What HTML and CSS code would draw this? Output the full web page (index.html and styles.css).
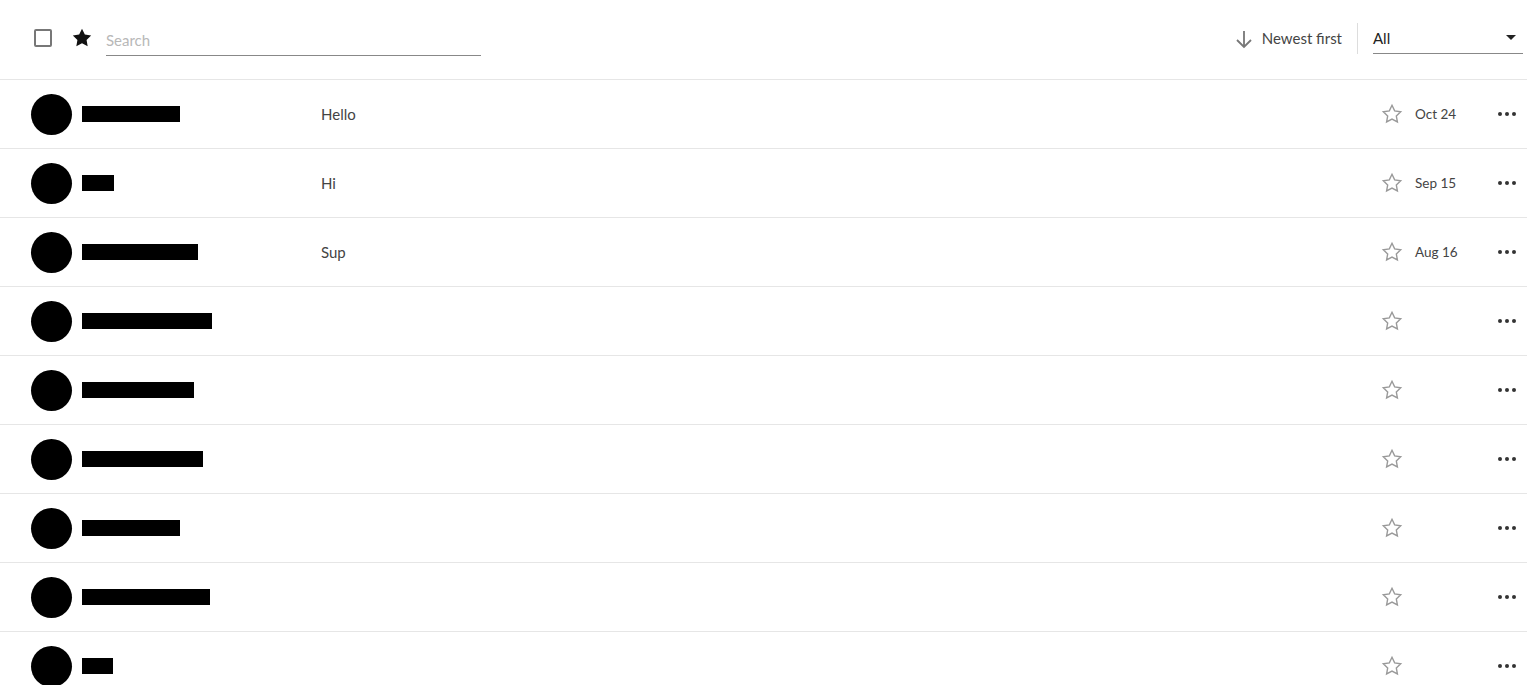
FILE: index.html
```html
<!DOCTYPE html>
<html>
<head>
<meta charset="utf-8">
<link rel="stylesheet" href="styles.css">
</head>
<body>
<header class="toolbar">
  <div class="tb-left">
    <span class="checkbox"></span>
    <svg class="star-filled" width="22" height="22" viewBox="0 0 24 24"><polygon points="12,2 15.09,8.26 22,9.27 17,14.14 18.18,21.02 12,17.77 5.82,21.02 7,14.14 2,9.27 8.91,8.26" fill="#111"/></svg>
    <div class="search"><span class="placeholder">Search</span></div>
  </div>
  <div class="tb-right">
    <div class="sort">
      <svg width="18" height="20" viewBox="0 0 18 20"><path d="M9 2 V18 M2 11 L9 18 L16 11" fill="none" stroke="#777" stroke-width="1.8"/></svg>
      <span>Newest first</span>
    </div>
    <span class="divider"></span>
    <div class="select"><span>All</span><span class="caret"></span></div>
  </div>
</header>
<main class="list">
  <div class="row"><span class="avatar"></span><div class="name"><span class="redact" style="width:98px"></span></div><div class="msg">Hello</div><svg class="star" width="22" height="22" viewBox="0 0 24 24"><polygon points="12,2.5 14.9,8.6 21.5,9.5 16.7,14.1 17.9,20.7 12,17.5 6.1,20.7 7.3,14.1 2.5,9.5 9.1,8.6"/></svg><div class="date">Oct 24</div><div class="dots"><i></i><i></i><i></i></div></div>
  <div class="row"><span class="avatar"></span><div class="name"><span class="redact" style="width:32px"></span></div><div class="msg">Hi</div><svg class="star" width="22" height="22" viewBox="0 0 24 24"><polygon points="12,2.5 14.9,8.6 21.5,9.5 16.7,14.1 17.9,20.7 12,17.5 6.1,20.7 7.3,14.1 2.5,9.5 9.1,8.6"/></svg><div class="date">Sep 15</div><div class="dots"><i></i><i></i><i></i></div></div>
  <div class="row"><span class="avatar"></span><div class="name"><span class="redact" style="width:116px"></span></div><div class="msg">Sup</div><svg class="star" width="22" height="22" viewBox="0 0 24 24"><polygon points="12,2.5 14.9,8.6 21.5,9.5 16.7,14.1 17.9,20.7 12,17.5 6.1,20.7 7.3,14.1 2.5,9.5 9.1,8.6"/></svg><div class="date">Aug 16</div><div class="dots"><i></i><i></i><i></i></div></div>
  <div class="row"><span class="avatar"></span><div class="name"><span class="redact" style="width:130px"></span></div><div class="msg"></div><svg class="star" width="22" height="22" viewBox="0 0 24 24"><polygon points="12,2.5 14.9,8.6 21.5,9.5 16.7,14.1 17.9,20.7 12,17.5 6.1,20.7 7.3,14.1 2.5,9.5 9.1,8.6"/></svg><div class="date"></div><div class="dots"><i></i><i></i><i></i></div></div>
  <div class="row"><span class="avatar"></span><div class="name"><span class="redact" style="width:112px"></span></div><div class="msg"></div><svg class="star" width="22" height="22" viewBox="0 0 24 24"><polygon points="12,2.5 14.9,8.6 21.5,9.5 16.7,14.1 17.9,20.7 12,17.5 6.1,20.7 7.3,14.1 2.5,9.5 9.1,8.6"/></svg><div class="date"></div><div class="dots"><i></i><i></i><i></i></div></div>
  <div class="row"><span class="avatar"></span><div class="name"><span class="redact" style="width:121px"></span></div><div class="msg"></div><svg class="star" width="22" height="22" viewBox="0 0 24 24"><polygon points="12,2.5 14.9,8.6 21.5,9.5 16.7,14.1 17.9,20.7 12,17.5 6.1,20.7 7.3,14.1 2.5,9.5 9.1,8.6"/></svg><div class="date"></div><div class="dots"><i></i><i></i><i></i></div></div>
  <div class="row"><span class="avatar"></span><div class="name"><span class="redact" style="width:98px"></span></div><div class="msg"></div><svg class="star" width="22" height="22" viewBox="0 0 24 24"><polygon points="12,2.5 14.9,8.6 21.5,9.5 16.7,14.1 17.9,20.7 12,17.5 6.1,20.7 7.3,14.1 2.5,9.5 9.1,8.6"/></svg><div class="date"></div><div class="dots"><i></i><i></i><i></i></div></div>
  <div class="row"><span class="avatar"></span><div class="name"><span class="redact" style="width:128px"></span></div><div class="msg"></div><svg class="star" width="22" height="22" viewBox="0 0 24 24"><polygon points="12,2.5 14.9,8.6 21.5,9.5 16.7,14.1 17.9,20.7 12,17.5 6.1,20.7 7.3,14.1 2.5,9.5 9.1,8.6"/></svg><div class="date"></div><div class="dots"><i></i><i></i><i></i></div></div>
  <div class="row"><span class="avatar"></span><div class="name"><span class="redact" style="width:31px"></span></div><div class="msg"></div><svg class="star" width="22" height="22" viewBox="0 0 24 24"><polygon points="12,2.5 14.9,8.6 21.5,9.5 16.7,14.1 17.9,20.7 12,17.5 6.1,20.7 7.3,14.1 2.5,9.5 9.1,8.6"/></svg><div class="date"></div><div class="dots"><i></i><i></i><i></i></div></div>
</main>
</body>
</html>
```
FILE: styles.css
```css
* { box-sizing: border-box; }
html, body { margin: 0; padding: 0; background: #fff; }
body {
  font-family: Lato, "Open Sans", "Liberation Sans", sans-serif;
  color: #333;
  overflow: hidden;
}
.toolbar {
  height: 80px;
  border-bottom: 1px solid #e6e6e6;
  display: flex;
  align-items: flex-start;
  justify-content: space-between;
  padding: 0 4px 0 34px;
}
.tb-left { display: flex; align-items: flex-start; }
.checkbox {
  width: 18px; height: 18px;
  border: 2px solid #777;
  border-radius: 2px;
  margin-top: 29px;
}
.star-filled { margin-left: 19px; margin-top: 27px; }
.search {
  margin-left: 13px;
  margin-top: 25px;
  width: 375px;
  height: 31px;
  border-bottom: 1px solid #888;
  display: flex;
  align-items: center;
  padding-bottom: 1px;
}
.placeholder { color: #b8b8b8; font-size: 15px; }
.tb-right { display: flex; align-items: center; margin-top: 22px; }
.sort { display: flex; align-items: center; gap: 9px; font-size: 15px; color: #444; }
.sort svg { margin-top: 1px; margin-left: -2px; }
.divider { width: 1px; height: 31px; background: #ddd; margin: 0 15px 0 15px; }
.select {
  width: 150px;
  height: 32px;
  border-bottom: 1px solid #888;
  display: flex;
  align-items: center;
  justify-content: space-between;
  font-size: 15px;
  color: #222;
  padding-right: 7px;
  align-self: flex-start;
}
.caret {
  width: 0; height: 0;
  border-left: 5px solid transparent;
  border-right: 5px solid transparent;
  border-top: 5px solid #222;
}
.row {
  height: 69px;
  border-bottom: 1px solid #e6e6e6;
  display: flex;
  align-items: center;
  padding: 0 11px 0 31px;
}
.avatar {
  width: 41px; height: 41px;
  border-radius: 50%;
  background: #000;
  flex: none;
}
.name { width: 249px; padding-left: 10px; display: flex; align-items: center; flex: none; }
.redact { display: block; height: 16px; background: #000; }
.msg { flex: 1; font-size: 15px; color: #444; }
.star { flex: none; fill: none; stroke: #999; stroke-width: 1.5; }
.date { width: 95px; padding-left: 12px; font-size: 13.5px; color: #444; flex: none; }
.dots { display: flex; gap: 3px; width: 18px; flex: none; }
.dots i { width: 4px; height: 4px; border-radius: 50%; background: #333; }
```
